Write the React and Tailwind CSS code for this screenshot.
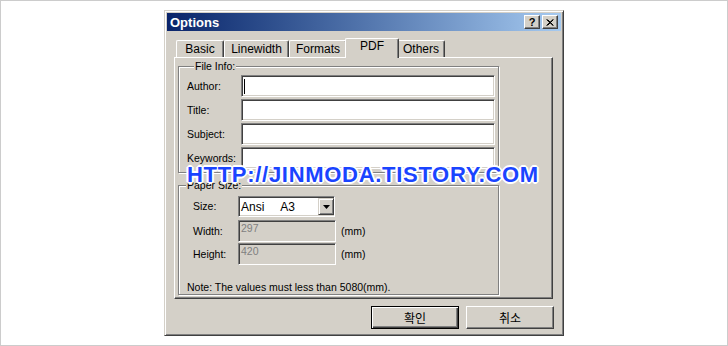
const raised =
  "border border-t-white border-l-white border-r-[#404040] border-b-[#404040] shadow-[inset_-1px_-1px_#808080]";
const sunken =
  "border border-t-[#808080] border-l-[#808080] border-r-white border-b-white shadow-[inset_1px_1px_#404040,inset_-1px_-1px_#d4d0c8]";
const etched = "border border-[#808080] shadow-[inset_1px_1px_#fff,1px_1px_#fff]";

const tabs = [
  { label: "Basic", w: "w-[48px]" },
  { label: "Linewidth", w: "w-[65px]" },
  { label: "Formats", w: "w-[58px]" },
  { label: "PDF", w: "w-[54px]", active: true },
  { label: "Others", w: "w-[48px]" },
];

const fileFields = ["Author:", "Title:", "Subject:", "Keywords:"];

function Field({ label, caret }) {
  return (
    <div className="flex items-center">
      <span className="w-[54px] text-[10.5px] leading-[13px]">{label}</span>
      <div className={`w-[254px] h-[22px] bg-white flex items-center ${sunken}`}>
        {caret && <div className="ml-[2px] w-px h-[15px] bg-black" />}
      </div>
    </div>
  );
}

function DisabledField({ label, value }) {
  return (
    <div className="flex items-center">
      <span className="w-[45px] text-[10.5px] leading-[13px]">{label}</span>
      <div className={`w-[98px] h-[22px] bg-[#d4d0c8] pl-[2px] flex items-start ${sunken}`}>
        <span className="text-[10.5px] leading-[13px] text-[#808080] mt-[1px]">{value}</span>
      </div>
      <span className="ml-[5px] text-[10.5px] leading-[13px]">(mm)</span>
    </div>
  );
}

export default function App() {
  return (
    <div className="relative w-[728px] h-[346px] bg-white border border-[#cccccc] pl-[163px] pt-[9px] font-['Liberation_Sans',Arial,sans-serif] text-black">
      <div className="w-[400px] h-[326px] bg-[#d4d0c8] border border-t-[#d4d0c8] border-l-[#d4d0c8] border-r-[#404040] border-b-[#404040] shadow-[inset_1px_1px_#fff,inset_-1px_-1px_#808080] p-[2px] flex flex-col">
        <div className="h-[18px] flex items-center justify-between bg-gradient-to-r from-[#0a246a] to-[#a6caf0] pl-[3px] pr-[3px]">
          <span className="text-[13px] font-bold text-white leading-none">Options</span>
          <div className="flex gap-[2px]">
            <div className={`w-[16px] h-[14px] bg-[#d4d0c8] flex items-center justify-center ${raised}`}>
              <span className="text-[11px] font-bold leading-none">?</span>
            </div>
            <div className={`w-[16px] h-[14px] bg-[#d4d0c8] flex items-center justify-center ${raised}`}>
              <svg width="8" height="7" viewBox="0 0 8 7">
                <path d="M0.5 0.5 L7 6.5 M1.5 0.5 L7.5 6.5 M7 0.5 L0.5 6.5 M7.5 0.5 L1.5 6.5" stroke="#000" strokeWidth="1" />
              </svg>
            </div>
          </div>
        </div>

        <div className="px-[7px] mt-[7px]">
          <div className="h-[19px] flex items-end pl-[2px]">
            {tabs.map((t) =>
              t.active ? (
                <div
                  key={t.label}
                  className={`${t.w} h-[20px] -mx-[2px] -mb-[1px] relative z-10 bg-[#d4d0c8] border-t border-l border-r border-t-white border-l-white border-r-[#404040] shadow-[inset_-1px_0_#808080] rounded-t-[2px] text-[12px] leading-[14px] text-center`}
                >
                  {t.label}
                </div>
              ) : (
                <div
                  key={t.label}
                  className={`${t.w} h-[17px] border-t border-l border-r border-t-white border-l-white border-r-[#404040] shadow-[inset_-1px_0_#808080] rounded-t-[2px] text-[12px] leading-[14px] text-center pt-[1px]`}
                >
                  {t.label}
                </div>
              )
            )}
          </div>

          <div className={`w-[379px] h-[242px] pl-[3px] pt-[2px] ${raised}`}>
            <fieldset className={`w-[321px] pl-[8px] pr-[3px] pb-[3px] ${etched}`}>
              <legend className="ml-[7px] px-[1px] bg-[#d4d0c8] text-[10.5px] leading-[13px]">File Info:</legend>
              <div className="mt-[2px] flex flex-col gap-[2px]">
                {fileFields.map((f, i) => (
                  <Field key={f} label={f} caret={i === 0} />
                ))}
              </div>
            </fieldset>

            <fieldset className={`mt-[6px] w-[321px] pl-[14px] ${etched}`}>
              <legend className="-ml-[7px] px-[1px] bg-[#d4d0c8] text-[10.5px] leading-[13px]">Paper Size:</legend>
              <div className="mt-[4px] flex items-center">
                <span className="w-[45px] text-[10.5px] leading-[13px]">Size:</span>
                <div className={`w-[97px] h-[21px] bg-white flex items-center justify-between pl-[2px] ${sunken}`}>
                  <div className="flex gap-[16px] text-[12px] leading-[14px]">
                    <span>Ansi</span>
                    <span>A3</span>
                  </div>
                  <div className="w-[16px] h-[17px] bg-[#d4d0c8] flex items-center justify-center border border-t-[#d4d0c8] border-l-[#d4d0c8] border-r-[#404040] border-b-[#404040] shadow-[inset_1px_1px_#fff,inset_-1px_-1px_#808080]">
                    <svg width="7" height="4" viewBox="0 0 7 4">
                      <path d="M0 0 H7 L3.5 4 Z" fill="#000" />
                    </svg>
                  </div>
                </div>
              </div>
              <div className="mt-[3px] flex flex-col gap-[1px]">
                <DisabledField label="Width:" value="297" />
                <DisabledField label="Height:" value="420" />
              </div>
              <p className="mt-[16px] -ml-[6px] text-[10.5px] leading-[13px]">
                Note: The values must less than 5080(mm).
              </p>
            </fieldset>
          </div>
        </div>

        <div className="mt-[7px] flex justify-end gap-[7px] pr-[7px] font-['Noto_Sans_CJK_KR','Liberation_Sans',sans-serif]">
          <button className="w-[88px] h-[23px] bg-[#d4d0c8] border border-black shadow-[inset_1px_1px_#fff,inset_-1px_-1px_#404040,inset_-2px_-2px_#808080] text-[12px] leading-none">
            확인
          </button>
          <button className={`w-[88px] h-[23px] bg-[#d4d0c8] text-[12px] leading-none ${raised}`}>
            취소
          </button>
        </div>
      </div>

      <div className="absolute left-[186px] top-[163px] text-[22px] leading-[22px] font-bold tracking-[0.7px] text-[#1a44ff] [text-shadow:2px_0_0_#fff,-2px_0_0_#fff,0_2px_0_#fff,0_-2px_0_#fff,1px_1px_0_#fff,-1px_-1px_0_#fff,1px_-1px_0_#fff,-1px_1px_0_#fff,0_0_3px_#fff]">
        HTTP://JINMODA.TISTORY.COM
      </div>
    </div>
  );
}
